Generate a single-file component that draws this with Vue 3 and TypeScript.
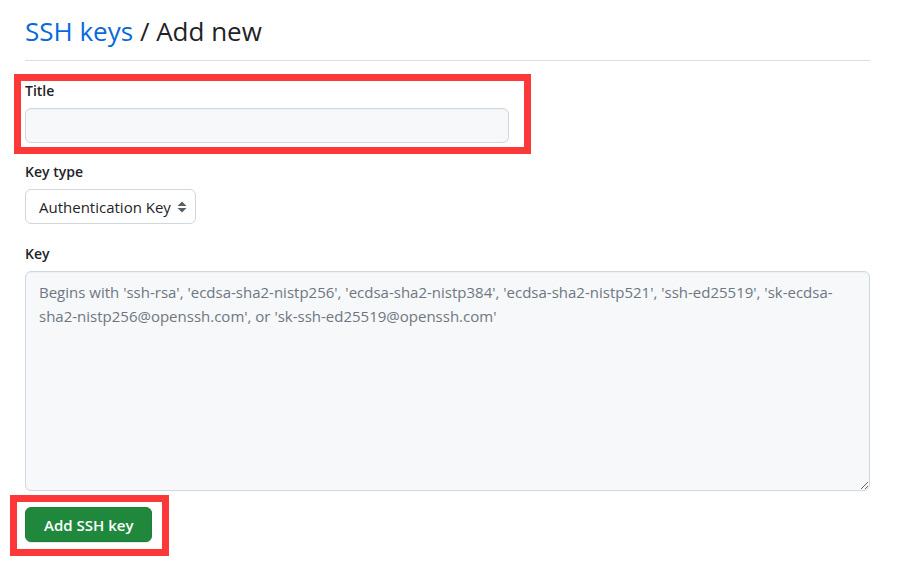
<script setup lang="ts">
import { ref } from 'vue'

const title = ref('')
const keyType = ref('authentication')
const key = ref('')
const placeholder =
  "Begins with 'ssh-rsa', 'ecdsa-sha2-nistp256', 'ecdsa-sha2-nistp384', 'ecdsa-sha2-nistp521', 'ssh-ed25519', 'sk-ecdsa-sha2-nistp256@openssh.com', or 'sk-ssh-ed25519@openssh.com'"
</script>

<template>
  <main class="page">
    <h1 class="heading"><a href="#keys">SSH keys</a> / Add new</h1>
    <form class="form" @submit.prevent>
      <div class="field field-title">
        <label for="title">Title</label>
        <input id="title" v-model="title" type="text" class="control" />
      </div>
      <div class="field">
        <label for="key-type">Key type</label>
        <div class="select-wrap">
          <select id="key-type" v-model="keyType" class="control">
            <option value="authentication">Authentication Key</option>
            <option value="signing">Signing Key</option>
          </select>
          <svg class="arrows" viewBox="0 0 10 12" aria-hidden="true">
            <path d="M5 0.5 9.5 5H0.5zM0.5 7H9.5L5 11.5z" fill="#57606a" />
          </svg>
        </div>
      </div>
      <div class="field field-key">
        <label for="key">Key</label>
        <textarea id="key" v-model="key" class="control" :placeholder="placeholder"></textarea>
      </div>
      <div class="actions">
        <button type="submit">Add SSH key</button>
      </div>
    </form>
  </main>
</template>

<style>
body {
  background: #fff;
}
</style>

<style scoped>
.page {
  padding: 13px 39px 20px 25px;
  color: #1f2328;
  font-family: "Segoe UI", "Open Sans", "Noto Sans", sans-serif;
  font-size: 15px;
  line-height: 24px;
}
.heading {
  margin: 0 0 18px;
  padding-bottom: 11px;
  border-bottom: 1px solid #d8dee4;
  font-size: 26px;
  font-weight: 400;
  line-height: 36px;
}
.heading a {
  color: #0969da;
  text-decoration: none;
}
.form {
  display: flex;
  flex-direction: column;
}
.field {
  display: flex;
  flex-direction: column;
  gap: 5px;
  margin-bottom: 17px;
}
.field label {
  align-self: flex-start;
  font-size: 14px;
  font-weight: 600;
}
.control {
  box-sizing: border-box;
  width: 100%;
  height: 35px;
  margin: 0;
  padding: 4px 13px;
  border: 1px solid #d0d7de;
  border-radius: 6px;
  background: #f6f8fa;
  color: inherit;
  font: inherit;
}
input.control,
textarea.control {
  box-shadow: inset 0 1px 0 rgba(208, 215, 222, 0.2);
}
.field-title,
.actions {
  position: relative;
}
.field-title {
  width: 484px;
  max-width: 100%;
}
/* Red highlight frames laid over the form */
.field-title::after,
.actions::after {
  content: "";
  position: absolute;
  border: 7px solid #fd3838;
  pointer-events: none;
}
.field-title::after {
  inset: -5px -22px -11px -11px;
}
.actions::after {
  inset: -12px -17px -14px -15px;
}
.select-wrap {
  display: grid;
  align-items: center;
  align-self: flex-start;
}
.select-wrap > * {
  grid-area: 1 / 1;
}
select.control {
  appearance: none;
  padding-right: 24px;
  background: #fff;
}
.arrows {
  width: 10px;
  height: 12px;
  margin-right: 9px;
  justify-self: end;
  pointer-events: none;
}
.field-key {
  margin-top: 1px;
  margin-bottom: 16px;
}
textarea.control {
  display: block;
  height: 220px;
  padding: 8px 13px;
  resize: vertical;
}
.control::placeholder {
  color: #6e7781;
  opacity: 1;
}
.actions {
  align-self: flex-start;
}
button {
  display: block;
  height: 35px;
  padding: 0 18px;
  border: 1px solid #1f7f39;
  border-radius: 6px;
  background: #1f883d;
  box-shadow: 0 1px 0 rgba(31, 35, 40, 0.1);
  color: #fff;
  font: inherit;
  font-weight: 600;
}
</style>
